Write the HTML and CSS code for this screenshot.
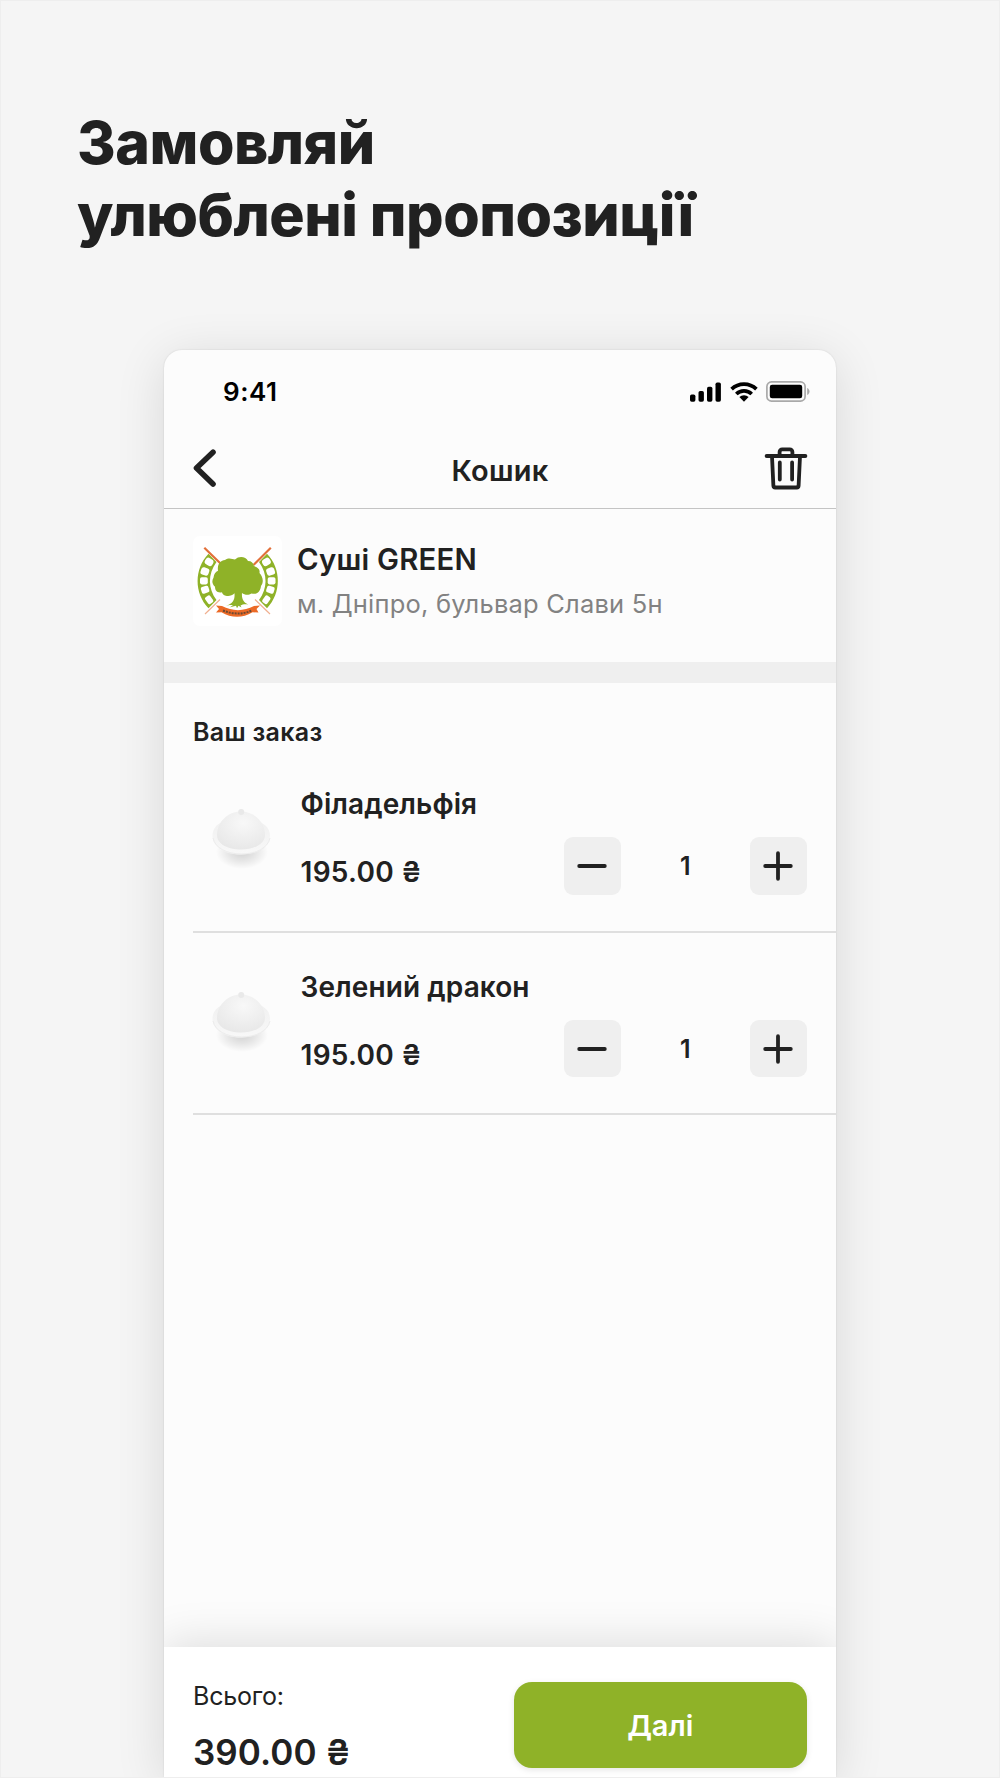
FILE: index.html
```html
<!DOCTYPE html>
<html lang="uk">
<head>
  <meta charset="UTF-8" />
  <meta name="viewport" content="width=device-width, initial-scale=1.0" />
  <title>Кошик</title>
  <link rel="stylesheet" href="styles.css">
</head>
<body>
  <!-- shared shapes -->
  <svg class="defs" width="0" height="0" aria-hidden="true">
    <defs>
      <radialGradient id="lid" cx="0.55" cy="0.3" r="0.75">
        <stop offset="0" stop-color="#f8f8f8" />
        <stop offset="1" stop-color="#e7e7e7" />
      </radialGradient>
      <linearGradient id="plate" x1="0" y1="0" x2="0" y2="1">
        <stop offset="0" stop-color="#f0f0f0" />
        <stop offset="1" stop-color="#f8f8f8" />
      </linearGradient>
      <radialGradient id="dish-shadow">
        <stop offset="0" stop-color="#000" stop-opacity="0.17" />
        <stop offset="0.5" stop-color="#000" stop-opacity="0.09" />
        <stop offset="1" stop-color="#000" stop-opacity="0" />
      </radialGradient>
      <symbol id="dish" viewBox="0 0 96 96">
        <ellipse cx="49" cy="55" rx="26" ry="17" fill="url(#dish-shadow)" />
        <path d="M19.500 39C19.500 27 31 22 48 22s29 5 29 17c0 11-13 18.500-29 18.500S19.500 50 19.500 39z" fill="url(#plate)" />
        <path d="M20 41c2 10 14 16 28.500 16S75 51 77 41" fill="none" stroke="#ececec" stroke-width="1" />
        <path d="M24 38c0-13 11-23.500 24-23.500S72 25 72 38c0 9-11 14.500-24 14.500S24 47 24 38z" fill="url(#lid)" />
        <circle cx="48.200" cy="15" r="3" fill="#e9e9e9" />
      </symbol>
      <symbol id="minus" viewBox="0 0 30 30">
        <path d="M2.200 15h25.600" />
      </symbol>
      <symbol id="plus" viewBox="0 0 30 30">
        <path d="M2.200 15h25.600M15 2.200v25.600" />
      </symbol>
      <g id="wreath-side">
        <path class="wreath" d="M15.500 17.800C1 33 1 57 15.500 72.300L23.500 64C15 53 14.500 38 23.500 26z" />
        <g class="wreath-cells">
          <rect x="11.800" y="22.300" width="8.400" height="7.200" rx="3" transform="rotate(32 16 26)" />
          <rect x="7.800" y="31.700" width="8.200" height="7.600" rx="2.400" transform="rotate(18 12 35.500)" />
          <rect x="7" y="41.200" width="7.800" height="7.200" rx="1.800" />
          <rect x="8.300" y="50.300" width="7.800" height="6.900" rx="1.800" transform="rotate(-18 12 54)" />
          <rect x="13" y="59.800" width="6" height="8" rx="1.500" transform="rotate(-35 16 63.500)" />
        </g>
      </g>
    </defs>
  </svg>

  <h1 class="headline">Замовляй<br>улюблені пропозиції</h1>

  <div class="phone">
    <div class="status-bar">
      <span class="time">9:41</span>
      <div class="status-icons">
        <svg width="31" height="20" viewBox="0 0 31 20">
          <rect x="0" y="12.500" width="5.400" height="7.200" rx="1.700" />
          <rect x="8.500" y="9" width="5.400" height="10.700" rx="1.700" />
          <rect x="17" y="4.700" width="5.400" height="15" rx="1.700" />
          <rect x="25.500" y="0.500" width="5.400" height="19.200" rx="1.700" />
        </svg>
        <svg width="28" height="20" viewBox="0 0 28 20">
          <g fill="none" stroke="#000" stroke-width="3.700">
            <path d="M1.600 7.200a17.800 17.800 0 0 1 24.800 0" />
            <path d="M6.300 12a11 11 0 0 1 15.400 0" />
          </g>
          <path d="M14 19.700l-4.600-4.600a6.600 6.600 0 0 1 9.200 0z" />
        </svg>
        <svg width="44" height="22" viewBox="0 0 44 22">
          <rect x="0.900" y="0.900" width="38.200" height="19.200" rx="4.600" fill="none" stroke="#a9a9a9" stroke-width="1.700" />
          <rect x="3.800" y="3.700" width="32.400" height="13.600" rx="2.300" />
          <path d="M41.200 7v7c1.400-.6 2.300-2 2.300-3.500S42.600 7.600 41.200 7z" fill="#a9a9a9" />
        </svg>
      </div>
    </div>

    <div class="nav">
      <svg class="back" width="24" height="40" viewBox="0 0 24 40">
        <path d="M20 4.300L3.500 20 20 36" />
      </svg>
      <span class="nav-title">Кошик</span>
      <svg class="trash" width="44" height="44" viewBox="0 0 44 44">
        <path d="M2.600 10h38.800" />
        <path d="M15.600 9.500V6a2.600 2.600 0 0 1 2.600-2.600h7.600A2.600 2.600 0 0 1 28.400 6v3.500" />
        <path d="M8 10.500l1.400 29.300c.1 1 .7 1.700 1.700 1.700h21.800c1 0 1.600-.7 1.700-1.700L36 10.500" />
        <path d="M15.800 16.500v17M28.100 16.500v17" />
      </svg>
    </div>

    <div class="shop">
      <svg class="shop-logo" width="89" height="90" viewBox="0 0 89 90">
        <use href="#wreath-side" />
        <use href="#wreath-side" transform="translate(89.500 0) scale(-1 1)" />
        <path class="stick" d="M11.300 11.800l17.500 17M77.800 11.800L60.500 29" />
        <path class="stick-thin" d="M27 63.500L12 78M62 63.500L77 78" />
        <path class="tree" d="M32 24c4-3 7-1 10-.5 4-4 11-3 13 1.500 3.500 0 5.500 2 6 5 5 2 6 4 5.500 7 3.500 4 4.500 9 1.500 13-.5 5-3.500 9-9.500 7.500-3 2-7 1.500-9.500-.5-.5 6 1.500 9.500 6.500 11.500-4-.5-6 0-8 1l1 2-3-1.800-1.500 2.500-1-2.500-6 1.500 3-2.200c-3-.3-5 .2-7 .7 7-2 9-6 8.500-12.500-4 4.500-12 3-12.500-1-5 1-7-2-7-5.500-3.500-3-3-6.500-1.500-9 .5-4 2-6 4.500-7-1-6.500 2.500-10.500 7-10.700z" />
        <path class="ribbon" d="M23 69.500l6 .5c10.500 5.500 21.500 5.500 32 0l6-.5-3.500 3.500 2 3.500-6-.2c-10 6-21 6-31 0l-5.500.2 3-3.500z" />
        <path class="ribbon-marks" d="M30 74.500Q45 80.500 59 74.500" />
      </svg>
      <div class="shop-info">
        <div class="shop-name">Суші GREEN</div>
        <div class="shop-address">м. Дніпро, бульвар Слави 5н</div>
      </div>
    </div>

    <div class="order">
      <h2 class="order-title">Ваш заказ</h2>

      <div class="item">
        <svg class="item-image"><use href="#dish" /></svg>
        <div class="item-info">
          <div class="item-name">Філадельфія</div>
          <div class="item-price">195.00 ₴</div>
        </div>
        <div class="stepper">
          <button aria-label="Менше"><svg><use href="#minus" /></svg></button>
          <span class="count">1</span>
          <button aria-label="Більше"><svg><use href="#plus" /></svg></button>
        </div>
      </div>

      <div class="item">
        <svg class="item-image"><use href="#dish" /></svg>
        <div class="item-info">
          <div class="item-name">Зелений дракон</div>
          <div class="item-price">195.00 ₴</div>
        </div>
        <div class="stepper">
          <button aria-label="Менше"><svg><use href="#minus" /></svg></button>
          <span class="count">1</span>
          <button aria-label="Більше"><svg><use href="#plus" /></svg></button>
        </div>
      </div>
    </div>

    <div class="footer">
      <div class="total">
        <div class="total-label">Всього:</div>
        <div class="total-sum">390.00 ₴</div>
      </div>
      <button class="next">Далі</button>
    </div>
  </div>
</body>
</html>
```
FILE: styles.css
```css
* {
  box-sizing: border-box;
}
html, body {
  margin: 0;
  padding: 0;
}
body {
  display: flex;
  flex-direction: column;
  height: 1778px;
  overflow: hidden;
  border: 1px solid #eeeeee;
  background-color: #f5f5f5;
  color: #212121;
  font-family: Inter, "Liberation Sans", sans-serif;
}
.defs {
  position: absolute;
}
.headline {
  margin: 106px 0 0 76px;
  height: 243px;
  font-size: 59px;
  line-height: 72px;
  font-weight: 800;
  letter-spacing: -0.500px;
}
.phone {
  display: flex;
  flex-direction: column;
  flex: 1;
  width: 672px;
  margin-left: 163px;
  border-radius: 18px 18px 0 0;
  background-color: #fcfcfc;
  box-shadow: 0 0 2px rgba(0, 0, 0, 0.12), 0 8px 50px rgba(0, 0, 0, 0.12);
}
.status-bar {
  display: flex;
  align-items: center;
  justify-content: space-between;
  height: 82px;
  padding: 0 26px 0 59px;
  color: #000;
}
.time {
  font-size: 26px;
  font-weight: 600;
  letter-spacing: 0.5px;
}
.status-icons {
  display: flex;
  align-items: center;
  gap: 8.500px;
  padding-top: 1px;
}
.nav {
  display: flex;
  align-items: center;
  justify-content: space-between;
  height: 77px;
  padding: 0 28px;
  border-bottom: 1px solid #c4c4c4;
}
.nav svg {
  fill: none;
  stroke: #212121;
  stroke-linecap: round;
  stroke-linejoin: round;
  margin-bottom: 4px;
}
.back {
  stroke-width: 5.6;
  margin-left: 1px;
  margin-right: 19px;
}
.trash {
  stroke-width: 3.8;
}
.nav-title {
  font-size: 29px;
  font-weight: 600;
  letter-spacing: 0.3px;
}
.shop {
  display: flex;
  gap: 15px;
  height: 153px;
  padding: 27px 29px 0;
}
.shop-logo {
  border-radius: 7px;
  background-color: #fff;
}
.shop-info {
  display: flex;
  flex-direction: column;
  gap: 8px;
  padding-top: 6px;
  line-height: 36px;
}
.shop-name {
  font-size: 29.300px;
  font-weight: 600;
  letter-spacing: 0.25px;
}
.shop-address {
  font-size: 25.500px;
  color: #828282;
  letter-spacing: 0.2px;
}
.wreath, .tree {
  fill: #8fb228;
}
.wreath-cells {
  fill: #fff;
}
.stick {
  fill: none;
  stroke: #e2703a;
  stroke-width: 2.2;
}
.stick-thin {
  fill: none;
  stroke: #f0b090;
  stroke-width: 1.2;
}
.ribbon {
  fill: #ec6a26;
}
.ribbon-marks {
  fill: none;
  stroke: #6b4a35;
  stroke-width: 2;
  stroke-dasharray: 2 1;
}
.order {
  flex: 1;
  border-top: 21px solid #efefef;
}
.order-title {
  margin: 0;
  padding: 31px 29px 0;
  height: 67px;
  font-size: 25px;
  line-height: 36px;
  font-weight: 600;
  letter-spacing: 0.3px;
}
.item {
  display: flex;
  height: 182.600px;
  margin-left: 29px;
  padding: 36px 29px 0 0;
  border-bottom: 2px solid #dfdfdf;
}
.item-image {
  width: 96px;
  height: 96px;
  margin-top: 11px;
}
.item-info {
  display: flex;
  flex-direction: column;
  flex: 1;
  gap: 32px;
  padding-left: 11.500px;
  font-size: 28px;
  line-height: 36px;
  font-weight: 600;
  letter-spacing: 0.1px;
}
.item-price {
  letter-spacing: 0.3px;
}
.stepper {
  display: flex;
  align-items: center;
  justify-content: space-between;
  width: 243.300px;
  height: 57.300px;
  margin-top: 51.300px;
}
.stepper button {
  display: flex;
  align-items: center;
  justify-content: center;
  width: 57.300px;
  height: 57.300px;
  padding: 0;
  border: none;
  border-radius: 9px;
  background-color: #efefef;
}
.stepper svg {
  width: 30px;
  height: 30px;
  stroke: #212121;
  stroke-width: 3.8;
  stroke-linecap: round;
}
.count {
  font-size: 25px;
  font-weight: 600;
}
.footer {
  display: flex;
  justify-content: space-between;
  height: 130.400px;
  padding: 35.400px 29px 0;
  background-color: #fff;
  box-shadow: 0 -4px 45px rgba(0, 0, 0, 0.13);
  clip-path: inset(-80px 0 0 0);
}
.total-label {
  height: 28px;
  font-size: 25px;
  line-height: 29px;
  letter-spacing: -0.2px;
}
.total-sum {
  margin-top: 19.600px;
  font-size: 35px;
  line-height: 44px;
  font-weight: 600;
  letter-spacing: 0.1px;
}
.next {
  width: 293.500px;
  height: 86px;
  padding: 0;
  border: none;
  border-radius: 18px;
  background-color: #8fb228;
  color: #fff;
  font-family: inherit;
  font-size: 29px;
  font-weight: 600;
  box-shadow: 0 2px 6px rgba(0, 0, 0, 0.1);
}
```
